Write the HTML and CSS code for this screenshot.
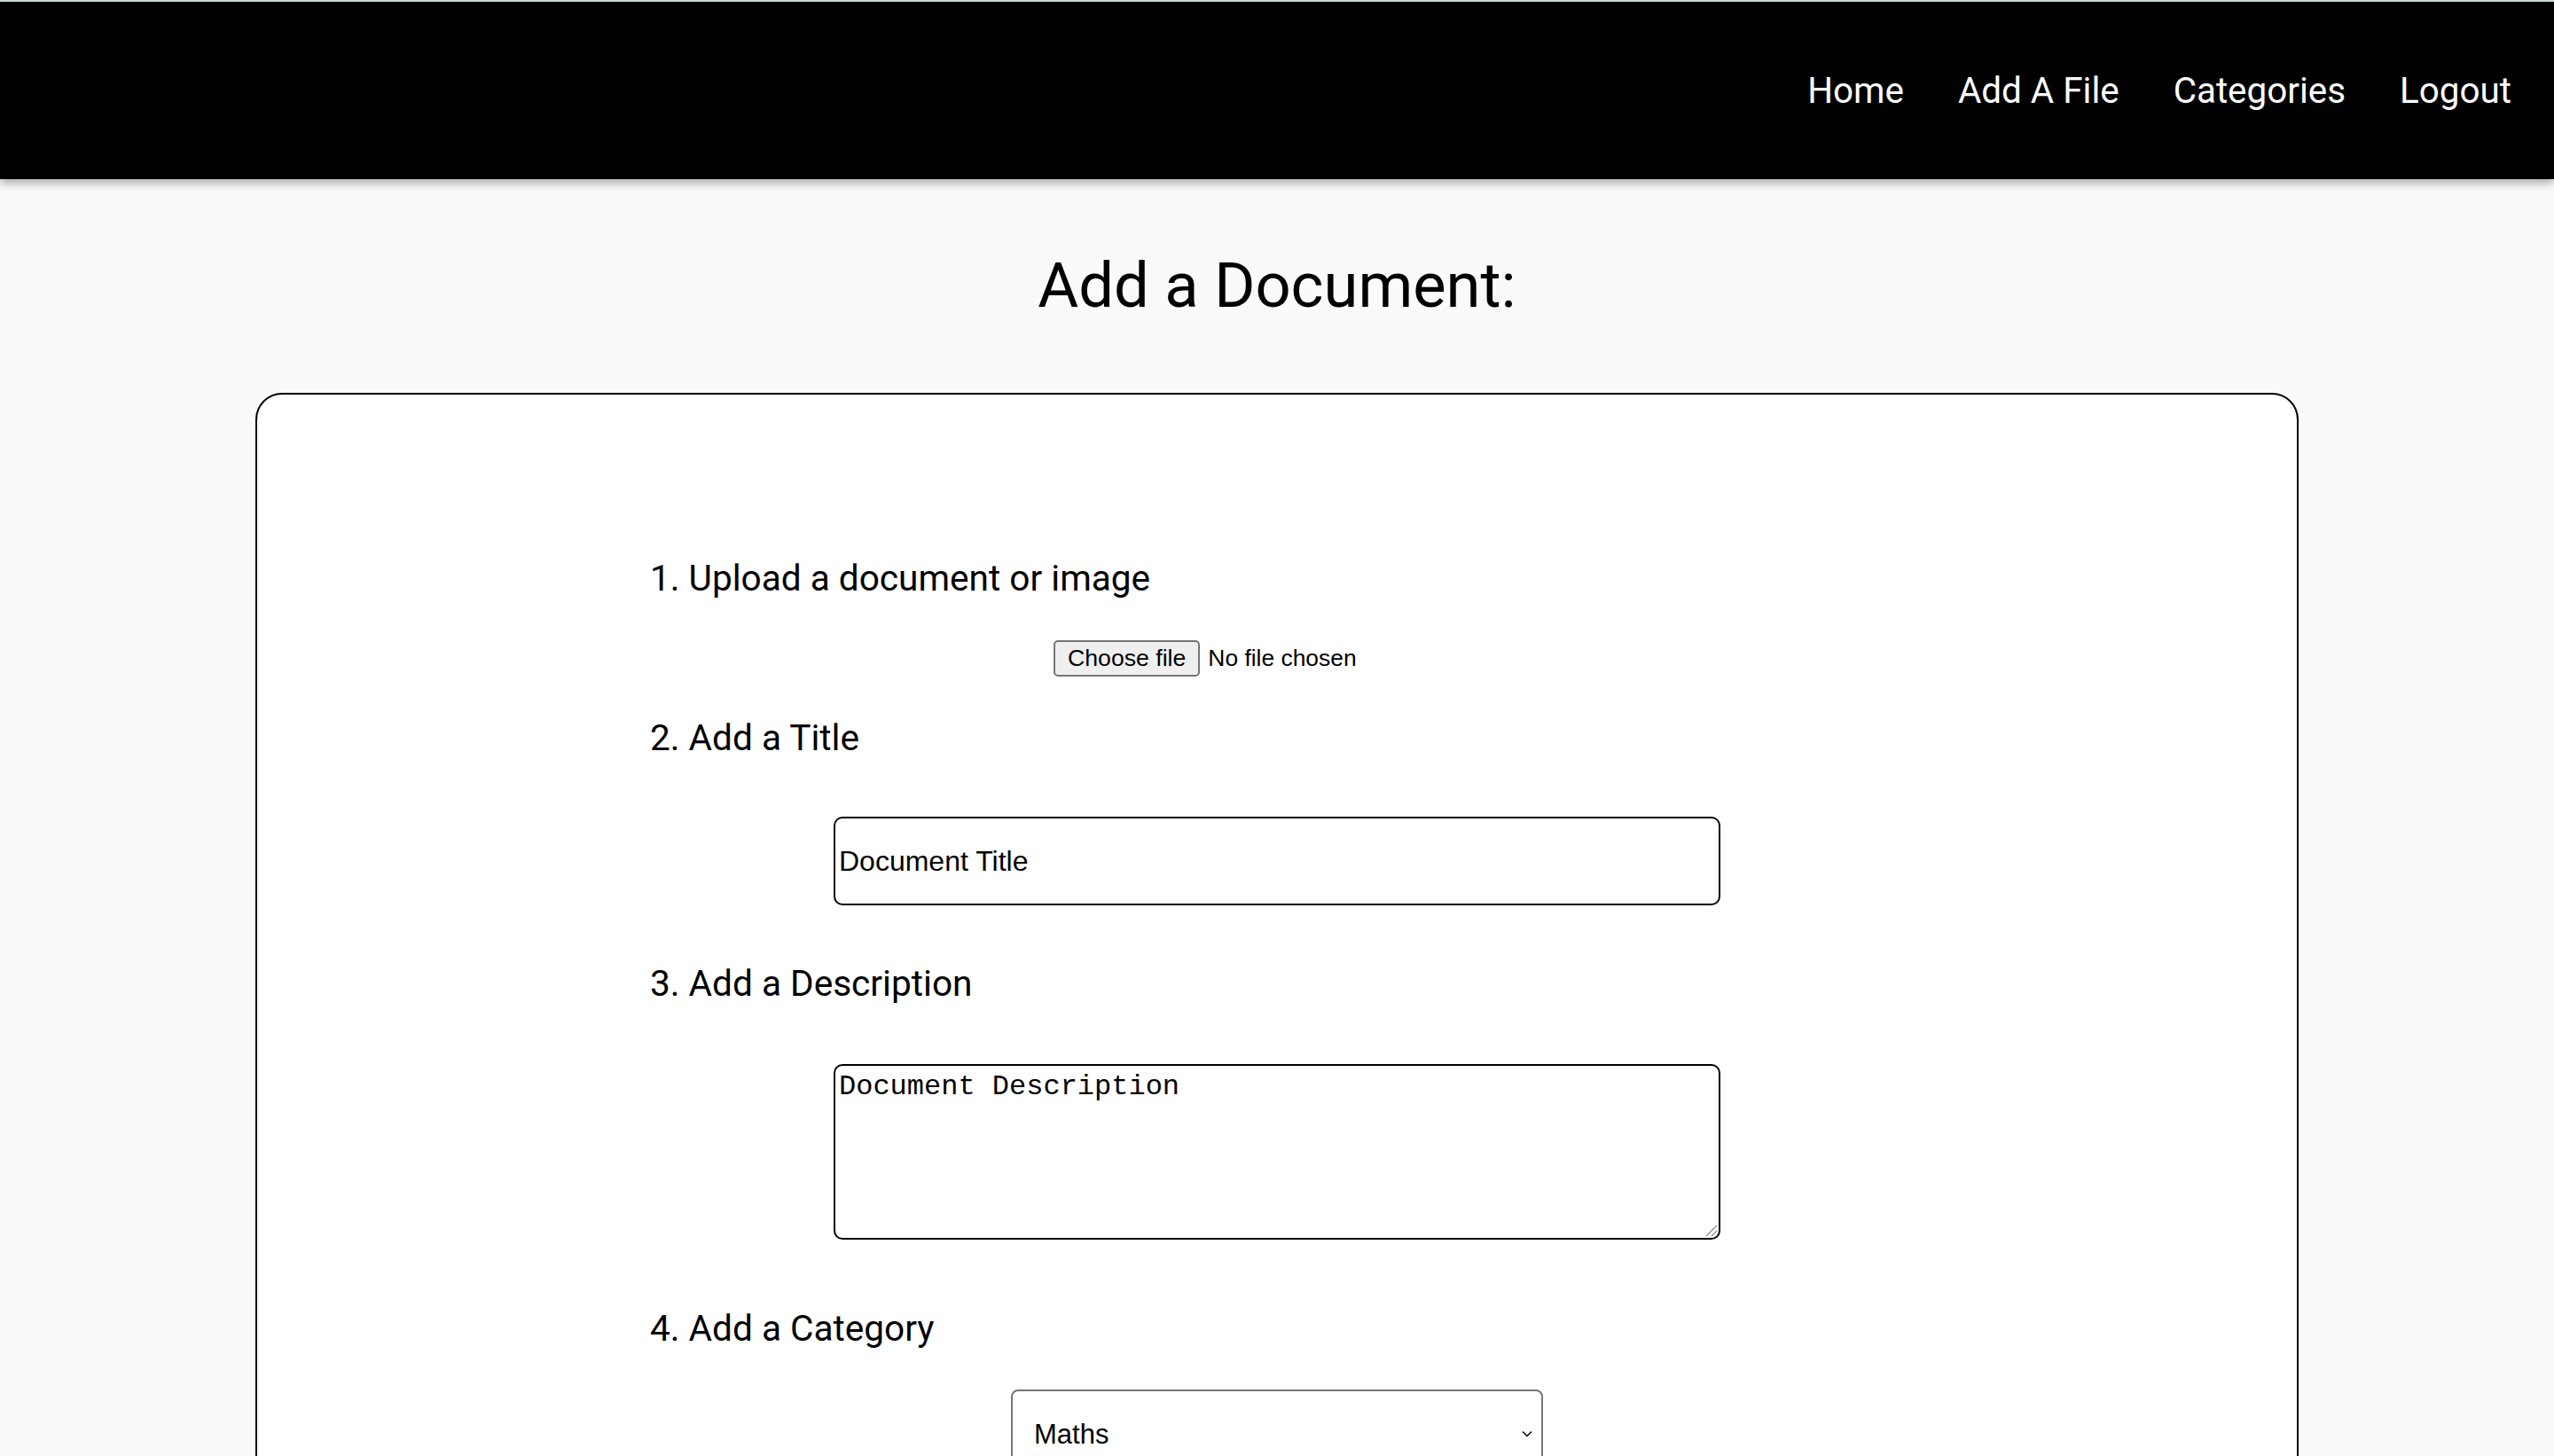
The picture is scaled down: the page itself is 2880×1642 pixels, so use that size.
FILE: index.html
```html
<!DOCTYPE html>
<html lang="en">
<head>
<meta charset="utf-8">
<title>Add a Document</title>
<link rel="stylesheet" href="styles.css">
</head>
<body>
<header class="topbar">
  <nav class="nav">
    <a class="nav-link" href="#">Home</a>
    <a class="nav-link" href="#">Add A File</a>
    <a class="nav-link" href="#">Categories</a>
    <a class="nav-link" href="#">Logout</a>
  </nav>
</header>
<main class="page">
  <h1 class="page-title">Add a Document:</h1>
  <section class="card">
    <form class="doc-form">
      <label class="step step-first">1. Upload a document or image</label>
      <div class="file-row">
        <div class="file-input">
          <button type="button" class="file-btn">Choose file</button>
          <span class="file-name">No file chosen</span>
        </div>
      </div>
      <label class="step step-title">2. Add a Title</label>
      <input class="text-input" type="text" value="Document Title">
      <label class="step step-desc">3. Add a Description</label>
      <div class="ta-wrap">
        <textarea class="text-area">Document Description</textarea>
        <svg class="grip" width="16" height="16" viewBox="0 0 16 16" aria-hidden="true">
          <line x1="3" y1="15" x2="15" y2="3" stroke="#8a8a8a" stroke-width="1.2"/>
          <line x1="9" y1="15" x2="15" y2="9" stroke="#8a8a8a" stroke-width="1.2"/>
        </svg>
      </div>
      <label class="step step-cat">4. Add a Category</label>
      <div class="select-wrap">
        <select class="select-input">
          <option>Maths</option>
          <option>Science</option>
          <option>English</option>
        </select>
        <svg class="chev" width="12" height="8" viewBox="0 0 12 8" aria-hidden="true">
          <polyline points="1,1.5 6,6.5 11,1.5" fill="none" stroke="#000" stroke-width="1.5"/>
        </svg>
      </div>
    </form>
  </section>
</main>
</body>
</html>
```

FILE: styles.css
```css
html, body {
  margin: 0;
  padding: 0;
}
body {
  background: #fafafa;
  font-family: Roboto, "Liberation Sans", sans-serif;
  color: #000;
}
.topbar {
  height: 200px;
  background: #000;
  border-top: 2px solid #c9d8cf;
  box-shadow: 0 4px 10px rgba(0, 0, 0, 0.35);
  display: flex;
  align-items: center;
  justify-content: flex-end;
  position: relative;
  z-index: 1;
}
.nav {
  display: flex;
  gap: 61px;
  padding-right: 48px;
}
.nav-link {
  color: #fff;
  text-decoration: none;
  font-family: Roboto, sans-serif;
  font-size: 40.4px;
  line-height: 47px;
}
.page {
  display: block;
}
.page-title {
  margin: 79px 0 80px;
  text-align: center;
  font-family: Roboto, sans-serif;
  font-weight: 400;
  font-size: 70.5px;
  line-height: 82px;
}
.card {
  width: 80%;
  box-sizing: border-box;
  margin: 0 auto;
  background: #fff;
  border: 2px solid #000;
  border-radius: 30px;
  padding: 184px 0 160px;
}
.doc-form {
  width: 1414px;
  margin: 0 auto;
  display: flex;
  flex-direction: column;
}
.step {
  display: block;
  font-family: Roboto, sans-serif;
  font-size: 40.6px;
  line-height: 47px;
  margin: 0;
}
.file-row {
  margin-top: 46px;
  display: flex;
  justify-content: center;
}
.file-input {
  width: 504px;
  height: 41px;
  display: flex;
  align-items: center;
}
.file-btn {
  height: 41px;
  box-sizing: border-box;
  padding: 0 14px;
  margin: 0;
  background: #efefef;
  border: 2px solid #767676;
  border-radius: 5px;
  font-family: "Liberation Sans", Arial, sans-serif;
  font-size: 26.67px;
  color: #000;
}
.file-name {
  margin-left: 9px;
  font-family: "Liberation Sans", Arial, sans-serif;
  font-size: 26.4px;
  color: #000;
}
.step-title {
  margin-top: 46px;
}
.text-input {
  margin: 65px auto 0;
  width: 1000px;
  height: 100px;
  box-sizing: border-box;
  border: 2px solid #000;
  border-radius: 10px;
  padding: 0 4px;
  font-family: "Liberation Sans", Arial, sans-serif;
  font-size: 32px;
  color: #000;
  background: #fff;
  outline: none;
}
.step-desc {
  margin-top: 65px;
}
.ta-wrap {
  position: relative;
  width: 1000px;
  margin: 67px auto 0;
}
.text-area {
  display: block;
  width: 1000px;
  height: 198px;
  box-sizing: border-box;
  margin: 0;
  border: 2px solid #000;
  border-radius: 10px;
  padding: 5px 4px;
  font-family: "Liberation Mono", "Courier New", monospace;
  font-size: 32px;
  color: #000;
  background: #fff;
  outline: none;
  resize: none;
}
.grip {
  position: absolute;
  right: 3px;
  bottom: 3px;
}
.step-cat {
  margin-top: 77px;
}
.select-wrap {
  position: relative;
  width: 600px;
  margin: 45px auto 0;
}
.select-input {
  display: block;
  -webkit-appearance: none;
  appearance: none;
  width: 600px;
  height: 100px;
  box-sizing: border-box;
  margin: 0;
  border: 2px solid #767676;
  border-radius: 8px;
  padding: 0 24px;
  font-family: "Liberation Sans", Arial, sans-serif;
  font-size: 31px;
  color: #000;
  background: #fff;
}
.chev {
  position: absolute;
  right: 12px;
  top: 46px;
}
```
